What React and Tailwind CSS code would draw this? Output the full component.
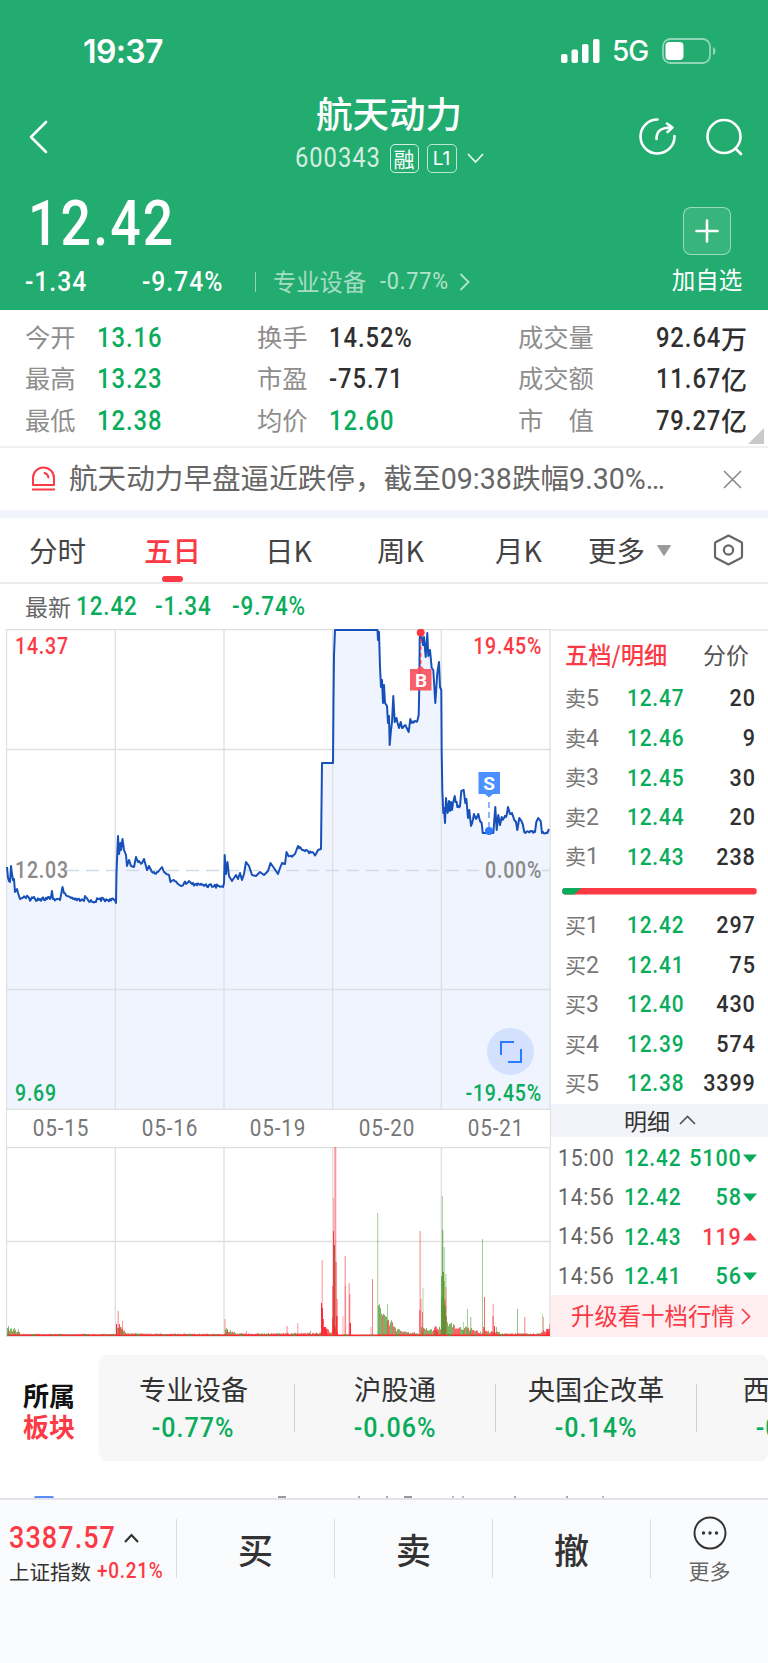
import clsx from "clsx";

const stats = [
  [
    { label: "今开", value: "13.16", green: true },
    { label: "最高", value: "13.23", green: true },
    { label: "最低", value: "12.38", green: true },
  ],
  [
    { label: "换手", value: "14.52%" },
    { label: "市盈", value: "-75.71" },
    { label: "均价", value: "12.60", green: true },
  ],
  [
    { label: "成交量", value: "92.64", unit: "万" },
    { label: "成交额", value: "11.67", unit: "亿" },
    { label: "市　值", value: "79.27", unit: "亿" },
  ],
];

const asks = [
  ["卖5", "12.47", "20"],
  ["卖4", "12.46", "9"],
  ["卖3", "12.45", "30"],
  ["卖2", "12.44", "20"],
  ["卖1", "12.43", "238"],
];

const bids = [
  ["买1", "12.42", "297"],
  ["买2", "12.41", "75"],
  ["买3", "12.40", "430"],
  ["买4", "12.39", "574"],
  ["买5", "12.38", "3399"],
];

const trades = [
  { time: "15:00", price: "12.42", qty: "5100" },
  { time: "14:56", price: "12.42", qty: "58" },
  { time: "14:56", price: "12.43", qty: "119", up: true },
  { time: "14:56", price: "12.41", qty: "56" },
];

const sectors = [
  ["专业设备", "-0.77%"],
  ["沪股通", "-0.06%"],
  ["央国企改革", "-0.14%"],
  ["西部开发", "-0.55%"],
];

const dates = ["05-15", "05-16", "05-19", "05-20", "05-21"];
const gridX = [0.5, 109.3, 218, 326.7, 435.3, 544];

// [x, y] in chart space, one list per run of ticks; third value is jitter on the way to the point
const price = [
  [7, 867], [8, 878], [9, 881], [10, 882], [11, 866], [12, 874], [13, 880], [14, 879], [15, 892], [17, 889],
  [18, 893], [20, 899], [22, 898, 1], [50, 899, 2.5], [51, 897], [52, 891], [53, 899], [60, 900, 1.5], [61, 895],
  [62.5, 887], [64, 893], [67, 896, 1], [73, 899, 1.5], [84, 901, 1.5], [85, 896], [88, 900, 1], [93, 902, 1.5],
  [98, 899, 2], [108, 900, 2], [115, 900, 1.5], [116, 903], [116.5, 872], [118, 836], [119, 854], [120.5, 843],
  [121, 850], [122.5, 839], [124, 850], [126, 855], [127, 866], [129, 860], [131, 866, 1], [134, 867], [136, 857],
  [138, 862], [142, 863, 2], [144, 859], [147, 870], [149, 866], [152, 872], [158, 872, 2], [162, 867], [164, 872],
  [169, 875, 1], [170.5, 882], [174, 880, 1], [178, 884, 1], [181, 886], [184, 883, 2], [190, 882, 1.5], [192, 884],
  [205, 885, 1.5], [218, 886, 2], [223, 887, 1], [224, 883], [224.7, 855], [226, 874], [227.5, 862], [229, 876],
  [232, 881], [234, 878, 1], [236, 875], [238, 879], [240, 873], [242, 880], [244, 874], [246, 862], [249, 866],
  [252, 875], [256, 876], [260, 872], [264, 875], [268, 871], [270.5, 863], [274, 868], [278, 874], [280, 868],
  [282, 863], [285, 864], [286.5, 852], [290, 856, 2], [295, 854, 2], [298, 846], [302, 850, 1.5], [308, 851, 1.5],
  [316, 854, 2], [318, 850], [321, 849], [322, 763], [333, 763], [333.5, 700], [334, 655], [335, 630], [377.5, 630],
  [378, 640], [379, 632], [380, 667], [381, 687], [382, 680], [383, 703], [384, 685], [385, 703], [387, 706],
  [388, 723], [389, 716], [389.7, 745], [391, 730], [392, 722], [393.3, 696], [394.7, 722], [396.5, 718], [399, 728, 2],
  [400.7, 722], [402, 728], [405.3, 725, 2], [408.7, 732], [410.3, 719], [411.7, 723], [417.3, 721, 2], [418.7, 715],
  [419.3, 687], [419.7, 638], [420.7, 632], [423, 645], [424, 637], [425.7, 657], [427.3, 633], [428.3, 656],
  [430, 650], [431.7, 668], [433.3, 670], [435.3, 703], [437.3, 673], [439, 662], [440, 687], [441.3, 690],
  [441.7, 753], [442.3, 790], [443.3, 813], [444, 808], [445, 823], [446, 798], [447.7, 813], [449, 801], [450, 811],
  [451, 802], [452, 810], [453, 803], [454.7, 796], [457.3, 807, 3], [460, 806, 2], [461.3, 791], [463.7, 790],
  [465.3, 803], [466.4, 799], [468, 818], [469.3, 810], [471, 826], [474, 814, 2], [476, 819], [478.3, 814, 1],
  [480, 821], [481.7, 823], [482.7, 833], [493.3, 833], [495.3, 807], [496.7, 830], [498.3, 815], [500, 825],
  [501.7, 817], [504, 818, 3], [506.7, 815, 2], [508, 807], [510, 814], [512, 813, 2], [514.3, 820], [516, 822],
  [517.3, 830], [519.3, 818], [522.7, 824, 2], [524.3, 832], [535, 832, 1], [536.3, 822], [538.3, 818], [540.7, 821],
  [542, 833], [547.3, 833, 1], [549, 829],
];

const rand = (n) => {
  const v = Math.sin(n * 12.9898) * 43758.5453;
  return v - Math.floor(v);
};

const buildLine = () => {
  const out = [];
  price.forEach(([x, y, jitter], i) => {
    if (jitter) {
      const [px, py] = price[i - 1];
      for (let t = px + 1; t < x - 0.5; t += 1) {
        const k = (t - px) / (x - px);
        out.push([t, py + (y - py) * k + (rand(t) - 0.5) * 2 * jitter]);
      }
    }
    out.push([x, y]);
  });
  return out.map(([x, y]) => `${(x - 6).toFixed(1)},${(y - 629).toFixed(1)}`).join(" ");
};

const linePoints = buildLine();

const RED = "#fb2c36";
const GREEN = "#4f9a2d";

// [x, height, color, opacity, width]
const spikes = [
  [8, 10, GREEN, 0.7], [14, 8, GREEN, 0.6], [18, 7, GREEN, 0.5],
  [116, 12, RED, 1], [117.5, 25, RED, 0.4, 1.5], [119, 12, RED, 0.8], [122, 15, RED, 0.5], [120.5, 9, GREEN, 0.7],
  [224.5, 17, RED, 0.5], [226, 8, GREEN, 0.6], [227, 7, GREEN, 0.6], [246, 5, RED, 0.5], [286.5, 10, RED, 0.6],
  [297.3, 13, RED, 0.5], [310, 5, GREEN, 0.6],
  [321.5, 76, RED, 0.35, 1.5], [321, 33, RED, 1], [322, 28, RED, 1], [323, 17, RED, 0.8], [324, 9, RED, 1], [325, 9, RED, 0.9], [326, 6, RED, 1],
  [333, 138, RED, 0.35, 1], [333, 105, RED, 0.9], [334.3, 189, RED, 0.5, 2], [334, 91, "#8a4a20", 0.8, 1], [335.5, 74, RED, 0.9],
  [332.5, 50, RED, 1], [336.5, 37, RED, 0.5, 1.3], [336, 20, RED, 1, 1.5],
  [344.5, 80, RED, 0.4, 1.5], [344.7, 50, RED, 0.3, 1.5], [342.5, 20, RED, 0.4], [348.5, 53, RED, 0.45, 1.3], [349.2, 42, RED, 0.5, 1.2], [349.5, 13, RED, 1, 1.5],
  [372, 57, RED, 0.6], [370.5, 9, RED, 0.4],
  [377.2, 123, GREEN, 0.5], [387, 32, GREEN, 0.5],
  [419.3, 105, RED, 0.35, 1.7], [419.3, 26, RED, 0.8, 1], [420.3, 37, RED, 0.45, 1.3], [422.3, 48, GREEN, 0.35, 1.3], [422, 24, RED, 0.6],
  [441.3, 60, GREEN, 1], [441.8, 140, GREEN, 0.4, 1.3], [442.2, 106, GREEN, 0.8], [442.6, 64, GREEN, 1, 1.3], [443.5, 89, GREEN, 0.35, 1.6], [443.5, 55, GREEN, 0.9, 1],
  [444.5, 37, RED, 0.8], [445.3, 62, GREEN, 0.4, 1.2], [445.5, 49, RED, 0.5, 1], [444.6, 30, GREEN, 0.7, 1.5],
  [467, 27, GREEN, 0.5], [470.3, 19, GREEN, 0.6], [463, 14, GREEN, 0.4],
  [482, 97, GREEN, 0.5], [484, 39, RED, 0.7], [492.7, 32, RED, 0.5], [492.5, 20, RED, 0.7], [494, 10, RED, 1], [496, 9, GREEN, 0.6],
  [517, 27, GREEN, 0.6], [524.3, 19, RED, 0.6], [542, 22, GREEN, 0.4], [543, 19, RED, 0.4], [546, 7, RED, 0.8, 3], [549, 12, RED, 0.4],
];

// [from, to, start height, end height, share of green]
const ranges = [
  [7, 20, 8, 4, 0.7], [20, 116, 2, 2, 0.4], [116, 126, 11, 4, 0.4], [126, 225, 2.5, 2, 0.4], [225, 236, 7, 3, 0.7],
  [236, 321, 2.5, 3, 0.4], [321, 332, 11, 3, 0.1], [332, 338, 18, 4, 0], [378, 384, 38, 18, 0.7], [384, 396, 22, 8, 0.6],
  [396, 412, 7, 3, 0.6], [412, 419, 4, 3, 0.5], [421, 438, 8, 5, 0.6], [434, 441, 9, 9, 0.1], [441, 447, 45, 14, 0.8], [447, 456, 14, 9, 0.6],
  [456, 470, 9, 8, 0.6], [470, 483, 8, 3, 0.4], [483, 487, 12, 3, 0.1], [487, 500, 5, 4, 0.5], [500, 541, 2.5, 2.5, 0.4], [541, 550, 5, 7, 0.2],
];

const volumeBars = [];
ranges.forEach(([from, to, h1, h2, green]) => {
  for (let x = from; x < to; x += 1) {
    const h = (h1 + ((h2 - h1) * (x - from)) / (to - from)) * (0.65 + rand(x * 3.1) * 0.5);
    volumeBars.push([x, h, rand(x * 1.7) < green ? GREEN : RED, 0.75, 1]);
  }
});

// Condensed DIN-like figures
const Num = ({ children, className }) => (
  <span
    className={clsx(
      "inline-block whitespace-nowrap font-['Roboto','Noto_Sans_CJK_SC',sans-serif] leading-none tracking-[0.04em]",
      className
    )}
  >
    {children}
  </span>
);

const StatusBar = () => (
  <div className="flex h-[102px] items-center pl-[83px] pr-[51px]">
    <span className="origin-left scale-x-[0.97] font-['Inter',sans-serif] text-[33px] leading-none font-semibold tracking-[-0.02em]">19:37</span>
    <svg className="ml-auto" width="39" height="24" viewBox="0 0 39 24" fill="currentColor">
      <rect x="0" y="15" width="6.5" height="9" rx="2" />
      <rect x="10.5" y="10.5" width="6.5" height="13.5" rx="2" />
      <rect x="21" y="5" width="6.5" height="19" rx="2" />
      <rect x="32" y="0" width="6.5" height="24" rx="2" />
    </svg>
    <span className="ml-3 w-[38px] font-['Inter',sans-serif] text-[28px] leading-none font-medium tracking-[-0.04em]">5G</span>
    <svg className="ml-3" width="55" height="26" viewBox="0 0 55 26">
      <rect x="1" y="1" width="47" height="24" rx="7.5" fill="none" stroke="#fff" strokeOpacity="0.5" strokeWidth="1.8" />
      <rect x="3.5" y="4" width="18" height="18" rx="4" fill="#fff" />
      <path d="M51 9 Q53.5 10 53.5 13 Q53.5 16 51 17 Z" fill="#fff" fillOpacity="0.5" />
    </svg>
  </div>
);

const TitleBar = () => (
  <div className="flex h-[93px] items-start justify-between pl-7 pr-6">
    <svg className="mt-[18px]" width="100" height="34" viewBox="0 0 100 34" fill="none" stroke="#fff" strokeWidth="2.6" strokeLinecap="round" strokeLinejoin="round">
      <path d="M18 2 L3 17 L18 32" />
    </svg>
    <div className="flex flex-col items-center pl-3">
      <h1 className="mt-[-7px] text-[36.5px] leading-[36px] font-medium">航天动力</h1>
      <div className="mt-3 flex h-[30px] items-center">
        <div className="flex w-[95px]">
          <Num className="origin-left scale-x-[0.88] text-[27px] tracking-[0.04em] opacity-80">600343</Num>
        </div>
        <span className="flex h-[29px] w-[29px] items-center justify-center rounded-[5px] border border-white/80 text-[21px] leading-none">融</span>
        <span className="ml-2 flex h-[29px] w-[30px] items-center justify-center rounded-[5px] border border-white/70 font-['Inter',sans-serif] text-[19px] leading-none">L1</span>
        <svg className="ml-[10px]" width="17" height="11" viewBox="0 0 17 11" fill="none" stroke="#fff" strokeOpacity="0.9" strokeWidth="1.7">
          <path d="M1 1 L8.5 9 L16 1" />
        </svg>
      </div>
    </div>
    <svg className="mt-[15px]" width="106" height="42" viewBox="0 0 106 42" fill="none" stroke="#fff" strokeWidth="2.6" strokeLinecap="round">
      <path d="M19.5 2.5 A17 17 0 1 0 36.5 19" />
      <path d="M18.5 22 C18.5 14 22 11 33 10.5" />
      <path d="M29 6.5 L34.5 10.5 L29.5 15" strokeLinejoin="round" />
      <circle cx="86" cy="19.5" r="16.5" />
      <path d="M97.5 31.5 L103 37" />
    </svg>
  </div>
);

const QuoteHead = () => (
  <div className="flex h-[115px] justify-between pl-[25px]">
    <div>
      <div className="flex h-[65px] items-start">
        <Num className="mt-[-3px] ml-[3px] origin-left scale-x-[0.85] text-[63px] font-medium">12.42</Num>
      </div>
      <div className="flex h-[43px] items-center">
        <div className="w-[117px]">
          <Num className="origin-left scale-x-[0.88] text-[28px] font-medium">-1.34</Num>
        </div>
        <div className="w-[113px]">
          <Num className="origin-left scale-x-[0.88] text-[28px] font-medium">-9.74%</Num>
        </div>
        <i className="h-5 w-px bg-white/50" />
        <span className="ml-[17px] w-[107px] text-[23.3px] leading-none text-white/60">专业设备</span>
        <div className="w-[79px]">
          <Num className="origin-left scale-x-[0.88] text-[24.5px] text-white/65">-0.77%</Num>
        </div>
        <svg width="11" height="18" viewBox="0 0 11 18" fill="none" stroke="#fff" strokeOpacity="0.65" strokeWidth="1.8">
          <path d="M1.5 1 L9.5 9 L1.5 17" />
        </svg>
      </div>
    </div>
    <div className="mr-[25px] flex w-[72px] flex-col items-center pt-3">
      <div className="flex h-[48px] w-[48px] items-center justify-center rounded-lg border border-white/50 bg-white/10">
        <svg width="24" height="24" viewBox="0 0 24 24" stroke="#fff" strokeWidth="2.6" strokeLinecap="round">
          <path d="M12 1.5 V22.5 M1.5 12 H22.5" />
        </svg>
      </div>
      <span className="mt-[13px] text-[23.5px] leading-none whitespace-nowrap">加自选</span>
    </div>
  </div>
);

const Stats = () => (
  <div className="relative flex h-[138px] border-b-2 border-[#f1f1f3] pt-[7px] pl-[25px]">
    {stats.map((col, i) => (
      <div key={i} className={clsx("flex flex-col", i === 0 && "w-[232px]", i === 1 && "w-[261px]", i === 2 && "w-[229px]")}>
        {col.map((row) => (
          <div key={row.label} className="flex h-[41.3px] items-center">
            <span className={clsx("pb-[2px] text-[25.3px] leading-none text-[#8e8e8e]", i < 2 ? "w-[72px]" : "w-[90px]")}>{row.label}</span>
            <span className={clsx("flex items-center", i === 2 && "ml-auto", row.green ? "text-[#09ac5b]" : "text-[#303030]")}>
              <Num className={clsx("mt-[2px] text-[27px] font-medium scale-x-[0.88]", i === 2 ? "origin-right" : "origin-left")}>{row.value}</Num>
              {row.unit && <span className="text-[26px] leading-none font-medium">{row.unit}</span>}
            </span>
          </div>
        ))}
      </div>
    ))}
    <svg className="absolute right-1 bottom-[2px]" width="16" height="16" viewBox="0 0 16 16">
      <path d="M16 0 V16 H0 Z" fill="#c9c9c9" />
    </svg>
  </div>
);

const Notice = () => (
  <div className="flex h-[70px] items-center border-b-8 border-[#f1f4fa] pl-[31px]">
    <svg width="25" height="26" viewBox="0 0 25 26" fill="none" stroke="#fb3a45" strokeWidth="2">
      <path d="M2 19 V12 A10.5 10.5 0 0 1 23 12 V19 Z" strokeLinejoin="round" />
      <path d="M13.5 7 Q17 8 17.5 11.5" strokeLinecap="round" />
      <path d="M1 23.5 H24" />
    </svg>
    <span className="ml-[13px] w-[654px] font-['Roboto','Noto_Sans_CJK_SC',sans-serif] text-[28.6px] leading-none whitespace-nowrap text-[#666]">
      航天动力早盘逼近跌停，截至09:38跌幅9.30%…
    </span>
    <svg width="19" height="19" viewBox="0 0 19 19" stroke="#888" strokeWidth="1.6">
      <path d="M1 1 L18 18 M18 1 L1 18" />
    </svg>
  </div>
);

const Tabs = () => (
  <div className="flex h-[66px] items-center border-b-2 border-[#ececee] text-[28.5px] leading-none text-[#444]">
    <span className="w-[115px] pl-[29px]">分时</span>
    <span className="relative flex h-full w-[115px] items-center justify-center font-medium text-[#fb3a45]">
      五日
      <i className="absolute bottom-0 left-[47px] h-[6px] w-[21px] rounded-full bg-[#fb3a45]" />
    </span>
    <span className="w-[116px] pl-[35px]">日K</span>
    <span className="w-[116px] pl-[31px]">周K</span>
    <span className="w-[126px] pl-[33px]">月K</span>
    <span className="w-[69px]">更多</span>
    <svg width="14" height="11" viewBox="0 0 14 11">
      <path d="M0.5 0.5 H13.5 L7 10.5 Z" fill="#9a9a9a" stroke="#9a9a9a" strokeLinejoin="round" />
    </svg>
    <svg className="ml-[42px]" width="31" height="32" viewBox="0 0 31 32" fill="none" stroke="#666" strokeWidth="2.2" strokeLinejoin="round">
      <path d="M15.5 1.5 L28 8 Q29 8.5 29 9.5 V22.5 Q29 23.5 28 24 L15.5 30.5 L3 24 Q2 23.5 2 22.5 V9.5 Q2 8.5 3 8 Z" />
      <circle cx="15.5" cy="16" r="4.6" />
    </svg>
  </div>
);

const PriceChart = () => (
  <div className="relative ml-[6px] h-[481px] w-[545px]">
    <svg className="block" width="545" height="481" viewBox="0 0 545 481" fill="none">
      <polygon points={`1,481 ${linePoints} 544,481`} fill="#eff4fe" />
      <g stroke="#dedfe1" strokeWidth="1.3">
        {gridX.map((x) => (
          <path key={x} d={`M${x} 0 V481`} />
        ))}
        <path d="M0 0.7 H545 M0 120.5 H545 M0 360.5 H545 M0 480.5 H545" />
      </g>
      <path d="M60 241.5 H480 M536 241.5 H544" stroke="#d0dce6" strokeWidth="1.6" strokeDasharray="13 7" />
      <polyline points={linePoints} stroke="#1750b8" strokeWidth="2" strokeLinejoin="round" />
      <path d="M414.7 10 V38" stroke="#fb3a45" strokeWidth="1.4" strokeDasharray="4 3" />
      <circle cx="414.7" cy="3.6" r="4" fill="#fb3a45" />
      <path d="M404 40 H411 L414.7 36.5 L418.400 40 H425.500 V61.500 H404 Z" fill="#f9505c" fillOpacity="0.92" />
      <path d="M483 173 V200" stroke="#6ea4fb" strokeWidth="1.6" strokeDasharray="6 4" />
      <circle cx="483" cy="202" r="4" fill="#2a7bff" />
      <path d="M472.500 143 H494 V165 H487 L483 168.500 L479 165 H472.500 Z" fill="#4c90ff" />
    </svg>
    <span className="absolute top-[41px] left-[404px] w-[22px] text-center font-['Roboto',sans-serif] text-[19px] leading-[21px] font-bold text-white">B</span>
    <span className="absolute top-[144px] left-[472px] w-[22px] text-center font-['Roboto',sans-serif] text-[19px] leading-[21px] font-bold text-white">S</span>
    <Num className="absolute top-[6px] left-[9px] origin-left scale-x-[0.85] text-[23px] font-medium text-[#fb3a45]">14.37</Num>
    <Num className="absolute top-[230px] left-[9px] origin-left scale-x-[0.85] text-[23px] font-medium text-[#8a8a8a]">12.03</Num>
    <Num className="absolute top-[453px] left-[9px] origin-left scale-x-[0.85] text-[23px] font-medium text-[#09ac5b]">9.69</Num>
    <Num className="absolute top-[6px] right-[9px] origin-right scale-x-[0.85] text-[23px] font-medium text-[#fb3a45]">19.45%</Num>
    <Num className="absolute top-[230px] right-[9px] origin-right scale-x-[0.85] text-[23px] font-medium text-[#8a8a8a]">0.00%</Num>
    <Num className="absolute top-[453px] right-[9px] origin-right scale-x-[0.85] text-[23px] font-medium text-[#09ac5b]">-19.45%</Num>
    <div className="absolute top-[399px] right-[17px] flex h-[47px] w-[47px] items-center justify-center rounded-full bg-[#d3e1fe]">
      <svg width="22" height="22" viewBox="0 0 22 22" fill="none" stroke="#2a7bff" strokeWidth="2">
        <path d="M1 14 V1 H14 M21 8 V21 H8" />
      </svg>
    </div>
  </div>
);

const VolumeChart = () => (
  <svg className="ml-[6px] block" width="545" height="190" viewBox="0 0 545 190" fill="none">
    <g stroke="#dedfe1" strokeWidth="1.3">
      {gridX.map((x) => (
        <path key={x} d={`M${x} 0 V190`} />
      ))}
      <path d="M0 0.500 H545 M0 94.500 H545 M0 189.500 H545" />
    </g>
    {volumeBars.concat(spikes).map(([x, h, color, opacity, w = 1], i) => (
      <rect key={i} x={x - 6} y={189 - h} width={w} height={h} fill={color} fillOpacity={opacity} />
    ))}
    <path d="M1 188.300 H544" stroke={RED} strokeWidth="1.6" />
    <path d="M1 188.300 H544" stroke={GREEN} strokeWidth="1.6" strokeDasharray="2 9 1 13 3 17 1 6" />
  </svg>
);

const BookRow = ({ row }) => (
  <div className="flex h-[39.65px] items-center pl-[14px]">
    <span className="w-[62px] font-['Roboto','Noto_Sans_CJK_SC',sans-serif] text-[21px] leading-none text-[#777]">
      {row[0][0]}
      <span className="text-[23px]">{row[0][1]}</span>
    </span>
    <Num className="origin-left scale-x-[0.85] text-[24.5px] font-medium text-[#09ac5b]">{row[1]}</Num>
    <Num className="mr-3 ml-auto origin-right scale-x-[0.88] text-[24.5px] font-medium text-[#303030]">{row[2]}</Num>
  </div>
);

const OrderBook = () => (
  <div className="flex h-[708px] w-[217px] flex-col border-t-2 border-[#ececee]">
    <div className="flex h-[48px] items-center pl-[14px]">
      <span className="w-[138px] text-[23.3px] leading-none font-medium whitespace-nowrap text-[#fb3a45]">五档/明细</span>
      <span className="text-[23px] leading-none text-[#555]">分价</span>
    </div>
    {asks.map((row) => (
      <BookRow key={row[0]} row={row} />
    ))}
    <svg className="mt-[11px] mb-[11px] ml-[11px]" width="195" height="7" viewBox="0 0 195 7">
      <rect x="0" y="0" width="195" height="6.500" rx="3" fill="#fb3a45" />
      <path d="M3 0 H19 L12 6.500 H3 Q0 6.500 0 3.250 Q0 0 3 0 Z" fill="#09ac5b" />
    </svg>
    {bids.map((row) => (
      <BookRow key={row[0]} row={row} />
    ))}
    <div className="mt-auto flex h-[34px] items-center justify-center bg-[#f2f4f9] pl-[1px] text-[23px] leading-none text-[#333]">
      明细
      <svg className="ml-[9px]" width="17" height="10" viewBox="0 0 17 10" fill="none" stroke="#555" strokeWidth="1.700">
        <path d="M1 9 L8.500 1.500 L16 9" />
      </svg>
    </div>
    {trades.map((t, i) => (
      <div key={i} className="flex h-[39.5px] items-center pt-[2px] pl-[7px]">
        <div className="w-[69px]">
          <Num className="origin-left scale-x-[0.86] text-[24.5px] text-[#666]">{t.time}</Num>
        </div>
        <Num className="origin-left scale-x-[0.85] text-[24.5px] font-medium text-[#09ac5b]">{t.price}</Num>
        <div className={clsx("mr-[11px] ml-auto flex items-center", t.up ? "text-[#fb3a45]" : "text-[#09ac5b]")}>
          <div className="flex w-[50px] justify-end">
            <Num className="origin-right scale-x-[0.88] text-[24.5px] font-medium">{t.qty}</Num>
          </div>
          <svg className="ml-[2px]" width="14" height="9" viewBox="0 0 14 9" fill="currentColor">
            <path d={t.up ? "M0 8.500 H14 L7 0.500 Z" : "M0 0.500 H14 L7 8.500 Z"} />
          </svg>
        </div>
      </div>
    ))}
    <div className="flex h-[42px] items-center bg-[#feeef0] pl-5 text-[23.4px] leading-none text-[#fb3a45]">
      升级看十档行情
      <svg className="ml-[6px]" width="10" height="17" viewBox="0 0 10 17" fill="none" stroke="currentColor" strokeWidth="1.700">
        <path d="M1 1 L8.500 8.500 L1 16" />
      </svg>
    </div>
  </div>
);

const Sectors = () => (
  <div className="mt-[18px] flex h-[106px]">
    <div className="flex w-[99px] flex-col pt-[24px] pl-[23px] text-[26px] leading-[31px] font-bold">
      <span className="text-[#111]">所属</span>
      <span className="text-[#fb3a45]">板块</span>
    </div>
    <div className="flex w-[669px] items-center overflow-hidden rounded-lg bg-[#f7f7f7] pl-[-6px]">
      {sectors.map(([name, pct], i) => (
        <div
          key={name}
          className={clsx("flex h-full shrink-0 items-center", i === 0 ? "w-[196px]" : "w-[201px]")}
        >
          <div className={clsx("flex flex-1 flex-col items-center pt-[2px]", i === 0 && "pr-[6px]")}>
            <span className="text-[27.3px] leading-none whitespace-nowrap text-[#333]">{name}</span>
            <Num className="mt-3 scale-x-[0.88] text-[28.5px] font-medium text-[#09ac5b]">{pct}</Num>
          </div>
          <i className="h-[48px] w-px bg-[#d0d0d0]" />
        </div>
      ))}
    </div>
  </div>
);

const TradeBar = () => (
  <div className="flex h-[165px] border-t-2 border-[#e2e3e6] bg-[#fafbfd]">
    <div className="w-[176px] pt-[21px] pl-[9px]">
      <div className="flex h-[33px] items-center">
        <div className="w-[115px]">
          <Num className="origin-left scale-x-[0.87] text-[31px] font-medium text-[#fb3a45]">3387.57</Num>
        </div>
        <svg width="15" height="10" viewBox="0 0 15 10" fill="none" stroke="#333" strokeWidth="2.200">
          <path d="M1 9 L7.500 2 L14 9" />
        </svg>
      </div>
      <div className="mt-1 flex h-[26px] items-center">
        <span className="w-[88px] text-[20.5px] leading-none text-[#333]">上证指数</span>
        <Num className="origin-left scale-x-[0.88] text-[21.5px] font-medium text-[#fb3a45]">+0.21%</Num>
      </div>
    </div>
    {["买", "卖", "撤"].map((label) => (
      <div key={label} className="flex h-[96px] w-[158px] items-center text-[35px] leading-none font-medium text-[#333]">
        <i className="h-[59px] w-px bg-[#dcdde0]" />
        <span className="flex-1 text-center">{label}</span>
      </div>
    ))}
    <div className="flex h-[96px] flex-1 items-center">
      <i className="h-[59px] w-px bg-[#dcdde0]" />
      <div className="flex flex-1 flex-col items-center">
        <svg width="34" height="34" viewBox="0 0 34 34" fill="none">
          <circle cx="17" cy="17" r="15.500" stroke="#333" strokeWidth="2" />
          <g fill="#333">
            <circle cx="10.500" cy="17" r="1.700" />
            <circle cx="17" cy="17" r="1.700" />
            <circle cx="23.500" cy="17" r="1.700" />
          </g>
        </svg>
        <span className="mt-[10px] text-[21px] leading-none text-[#666]">更多</span>
      </div>
    </div>
  </div>
);

const App = () => {
  return (
    <div className="flex h-[1663px] w-[768px] flex-col overflow-hidden bg-white font-['Noto_Sans_CJK_SC',sans-serif]">
      <header className="h-[310px] shrink-0 bg-[#22ac6f] text-white">
        <StatusBar />
        <TitleBar />
        <QuoteHead />
      </header>

      <Stats />
      <Notice />
      <Tabs />

      <div className="flex h-[45px] items-center pl-[25px] text-[#09ac5b]">
        <span className="w-[51px] text-[23px] leading-none text-[#666]">最新</span>
        <div className="w-[79px]">
          <Num className="origin-left scale-x-[0.88] text-[25.5px] font-medium">12.42</Num>
        </div>
        <div className="w-[77px]">
          <Num className="origin-left scale-x-[0.88] text-[25.5px] font-medium">-1.34</Num>
        </div>
        <Num className="origin-left scale-x-[0.88] text-[25.5px] font-medium">-9.74%</Num>
      </div>

      <div className="flex">
        <div className="w-[551px]">
          <PriceChart />
          <div className="ml-[6px] flex h-[37px] w-[545px] items-center border-x border-[#dedfe1]">
            {dates.map((d) => (
              <div key={d} className="flex flex-1 justify-center">
                <Num className="scale-x-[0.88] text-[23.5px] text-[#777]">{d}</Num>
              </div>
            ))}
          </div>
          <VolumeChart />
        </div>
        <OrderBook />
      </div>

      <Sectors />

      {/* Next feed row, mostly hidden behind the trade bar */}
      <div className="flex h-[37px] shrink-0 items-end overflow-hidden pl-[34px]">
        <i className="h-[2px] w-[20px] rounded-t-full bg-[#5b8bf5]" />
        <i className="ml-[224px] h-[2px] w-[8px] bg-[#999]" />
        <i className="ml-[72px] h-[2px] w-[2px] bg-[#aaa]" />
        <i className="ml-[26px] h-[2px] w-[2px] bg-[#aaa]" />
        <i className="ml-[16px] h-[2px] w-[8px] bg-[#999]" />
        <i className="ml-[40px] h-[2px] w-[2px] bg-[#bbb]" />
        <i className="ml-[8px] h-[2px] w-[2px] bg-[#bbb]" />
        <i className="ml-[50px] h-[2px] w-[2px] bg-[#aaa]" />
        <i className="ml-[50px] h-[2px] w-[2px] bg-[#aaa]" />
        <i className="ml-[34px] h-[2px] w-[2px] bg-[#bbb]" />
      </div>

      <TradeBar />
    </div>
  );
};

export default App;
